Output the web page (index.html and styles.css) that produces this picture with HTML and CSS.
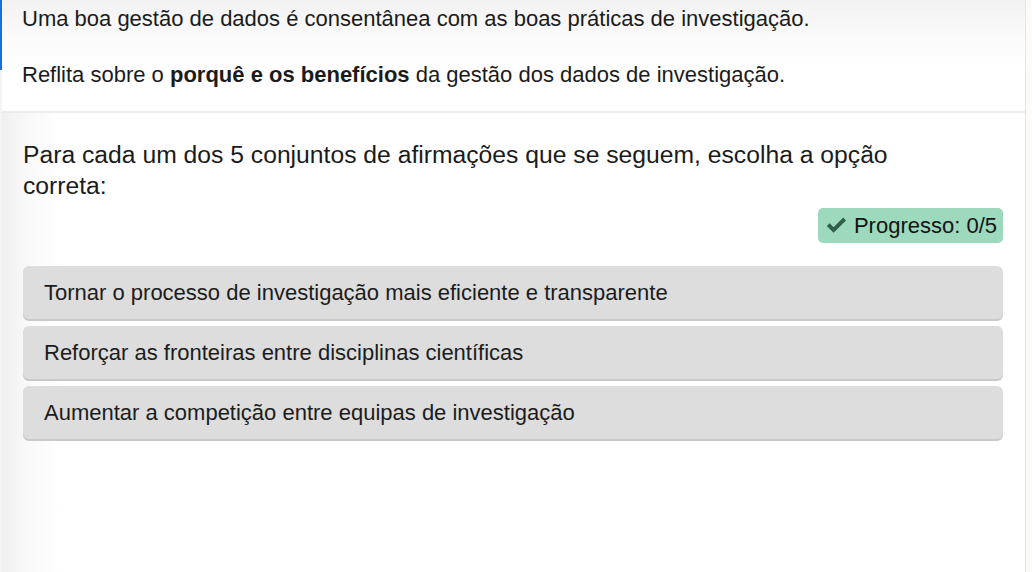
FILE: index.html
```html
<!DOCTYPE html>
<html lang="pt">
<head>
<meta charset="utf-8">
<link rel="stylesheet" href="styles.css">
</head>
<body>
<div class="frame">
  <div class="edge"><span class="edge-blue"></span></div>
  <div class="panel">
    <section class="intro">
      <p class="intro-line">Uma boa gestão de dados é consentânea com as boas práticas de investigação.</p>
      <p class="intro-line">Reflita sobre o <strong>porquê e os benefícios</strong> da gestão dos dados de investigação.</p>
    </section>
    <section class="task">
      <p class="question">Para cada um dos 5 conjuntos de afirmações que se seguem, escolha a opção correta:</p>
      <div class="progress-row">
        <div class="progress">
          <svg class="check" viewBox="0 0 21 17" width="21" height="17" aria-hidden="true">
            <path d="M0.8 9 L3.6 6.2 L7.6 10.2 L17.2 0.6 L20 3.4 L7.6 15.8 Z" fill="#2f5f4b"/>
          </svg>
          <span>Progresso: 0/5</span>
        </div>
      </div>
      <ul class="options">
        <li class="option">Tornar o processo de investigação mais eficiente e transparente</li>
        <li class="option">Reforçar as fronteiras entre disciplinas científicas</li>
        <li class="option">Aumentar a competição entre equipas de investigação</li>
      </ul>
    </section>
  </div>
  <div class="outside"></div>
</div>
</body>
</html>
```

FILE: styles.css
```css
html, body {
  margin: 0;
  padding: 0;
  height: 100%;
}
body {
  font-family: "Liberation Sans", Arial, sans-serif;
  color: #1b1b1b;
  background: #fdfbf9;
  overflow: hidden;
}
.frame {
  display: flex;
  height: 572px;
}
.edge {
  width: 2px;
  background: #f4f4f4;
  display: flex;
  flex-direction: column;
}
.edge-blue {
  display: block;
  height: 70px;
  background: #1c6fd8;
}
.panel {
  width: 1023px;
  border-right: 1px solid #e6e6e6;
  display: flex;
  flex-direction: column;
  background: #fff;
}
.outside {
  flex: 1;
  background: #fdfbf9;
}
.intro {
  height: 113px;
  box-sizing: border-box;
  border-bottom: 2px solid #ececec;
  background: linear-gradient(to bottom, #f2f2f2 0px, #fbfbfb 40px, #ffffff 70px);
  padding: 6px 0 0 20px;
}
.intro-line {
  margin: 0 0 30px 0;
  font-size: 22px;
  line-height: 26px;
}
.intro-line strong {
  font-weight: bold;
}
.task {
  flex: 1;
  background: linear-gradient(to right, #f0f0f0 0px, #fafafa 30px, #ffffff 60px);
  padding: 26px 22px 0 21px;
}
.question {
  margin: 0;
  font-size: 24.7px;
  line-height: 31px;
  max-width: 880px;
}
.progress-row {
  display: flex;
  justify-content: flex-end;
  margin-top: 7px;
}
.progress {
  display: flex;
  align-items: center;
  gap: 7px;
  height: 35px;
  padding: 0 6px 0 8px;
  background: #9dd9bd;
  border-radius: 5px;
  font-size: 22px;
  color: #141414;
}
.check {
  display: block;
}
.options {
  list-style: none;
  margin: 23px 0 0 0;
  padding: 0;
  display: flex;
  flex-direction: column;
  gap: 7px;
}
.option {
  height: 53px;
  display: flex;
  align-items: center;
  padding-left: 21px;
  background: #dddddd;
  border-radius: 6px;
  box-shadow: 0 2px 0 #c9c9c9;
  font-size: 22px;
  color: #1c1c1c;
}
```
